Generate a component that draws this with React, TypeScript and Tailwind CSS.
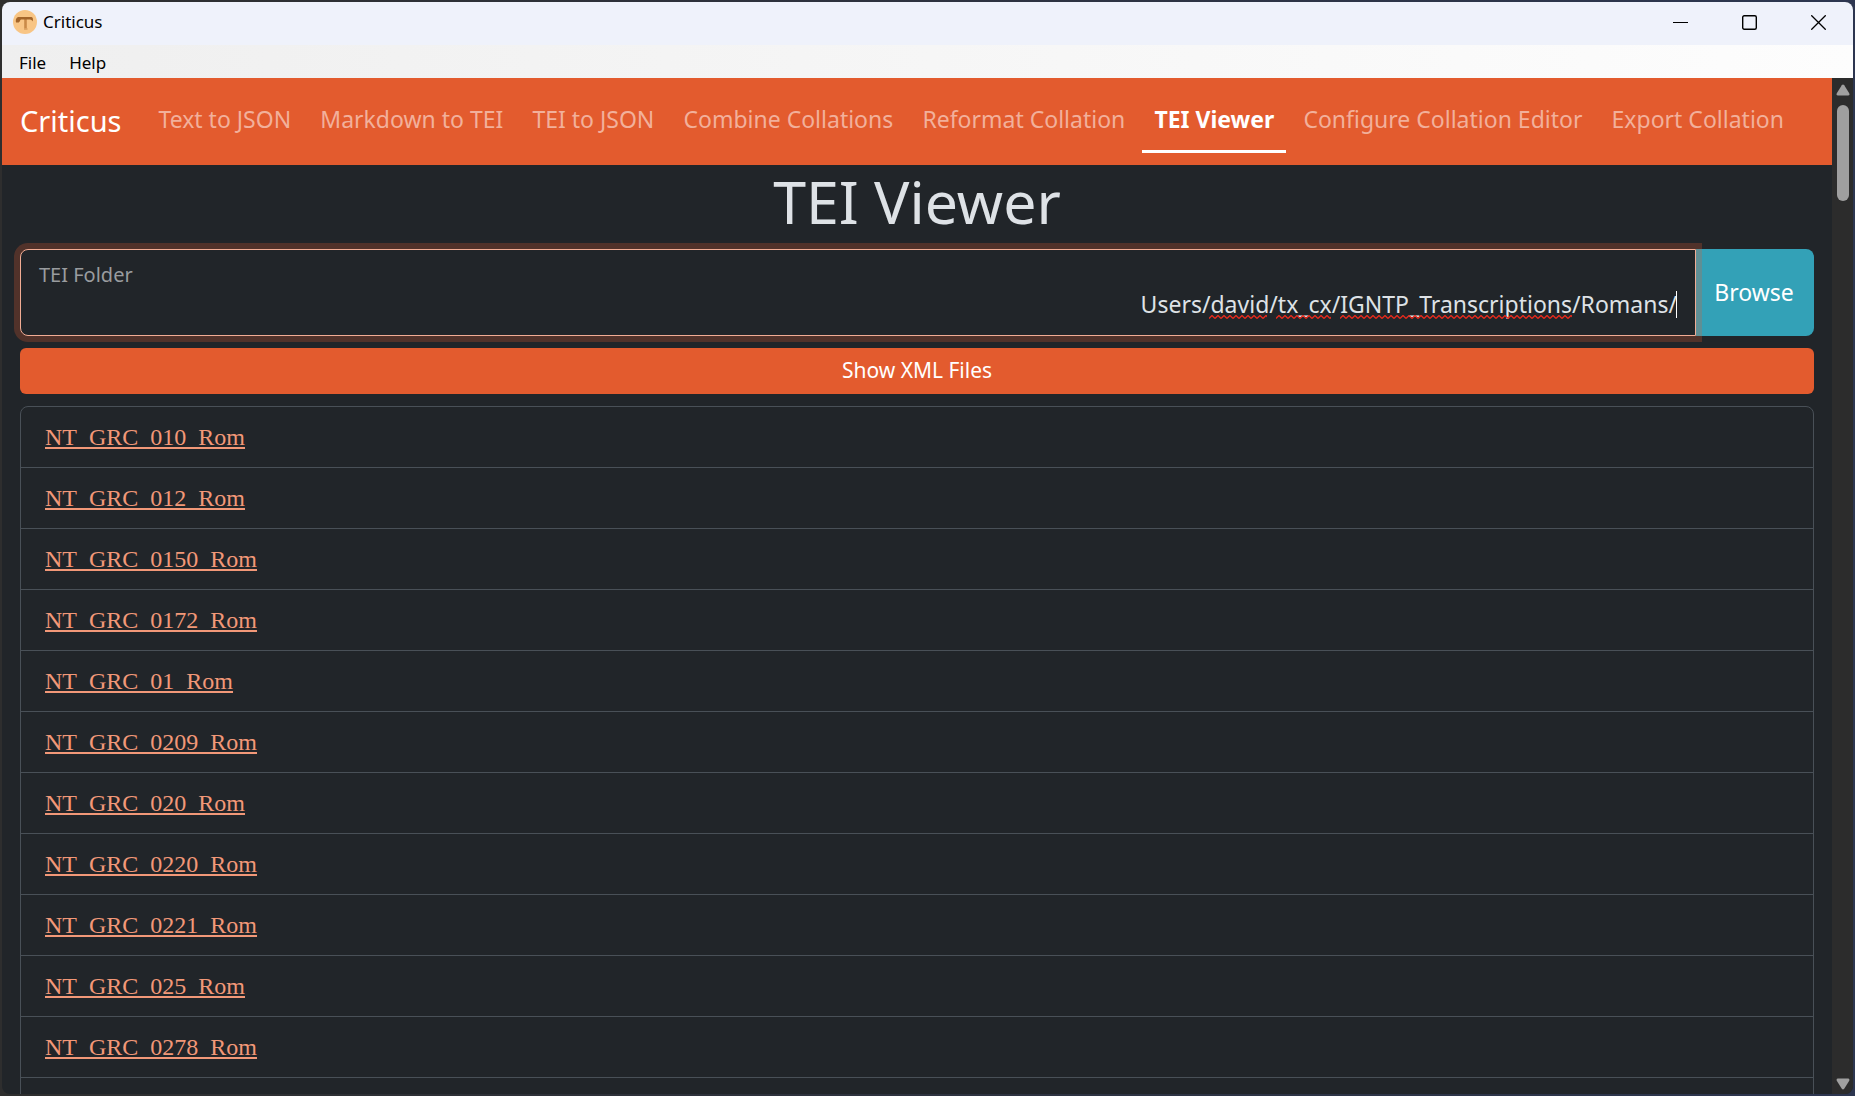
import React, { useState } from "react";

const NAV = [
  "Text to JSON",
  "Markdown to TEI",
  "TEI to JSON",
  "Combine Collations",
  "Reformat Collation",
  "TEI Viewer",
  "Configure Collation Editor",
  "Export Collation",
];

const FILES = [
  "NT_GRC_010_Rom",
  "NT_GRC_012_Rom",
  "NT_GRC_0150_Rom",
  "NT_GRC_0172_Rom",
  "NT_GRC_01_Rom",
  "NT_GRC_0209_Rom",
  "NT_GRC_020_Rom",
  "NT_GRC_0220_Rom",
  "NT_GRC_0221_Rom",
  "NT_GRC_025_Rom",
  "NT_GRC_0278_Rom",
];

function AppIcon() {
  return (
    <svg width="24" height="24" viewBox="0 0 24 24" aria-hidden="true">
      <circle cx="12" cy="12" r="12" fill="#f8c585" />
      <path d="M12.500 9v9.500" stroke="#c98a48" strokeWidth="2.600" />
      <path d="M11 19h3.500" stroke="#d79c5c" strokeWidth="1.500" />
      <path d="M3 12.500C2.300 9 3.500 7 6.500 7h12c1.500 0 1.800 2.500 1.300 4.500-.8-1.500-2-2-4-2H8c-1 0-.8 2.500-2.300 3z" fill="#a4652a" />
    </svg>
  );
}

function TitleBar() {
  return (
    <header className="flex h-[43px] shrink-0 items-center justify-between bg-[#eff2fb] text-black">
      <div className="flex items-center gap-[6px] pb-[3px] pl-[11px] text-[17px] leading-6">
        <AppIcon />
        <span>Criticus</span>
      </div>
      <div className="flex h-full pb-[2px]">
        <button aria-label="Minimize" className="flex w-[69px] items-center justify-center">
          <svg width="15" height="15" viewBox="0 0 15 15" stroke="#000" fill="none">
            <path d="M0 7.500h15" />
          </svg>
        </button>
        <button aria-label="Maximize" className="flex w-[69px] items-center justify-center">
          <svg width="15" height="15" viewBox="0 0 15 15" stroke="#000" fill="none">
            <rect x="0.700" y="0.700" width="13.600" height="13.600" rx="1.500" strokeWidth="1.400" />
          </svg>
        </button>
        <button aria-label="Close" className="flex w-[69px] items-center justify-center">
          <svg width="15" height="15" viewBox="0 0 15 15" stroke="#000" fill="none" strokeWidth="1.300">
            <path d="M.3.3l14.400 14.400M14.700.3L.3 14.700" />
          </svg>
        </button>
      </div>
    </header>
  );
}

function MenuBar() {
  return (
    <div className="flex h-[33px] shrink-0 items-center gap-[23px] bg-linear-to-r from-[#efefef] to-[#fdfdfd] px-[17px] pt-[2px] text-[17px] leading-6 text-black">
      <button>File</button>
      <button>Help</button>
    </div>
  );
}

function Scrollbar() {
  return (
    <div className="flex w-[21px] shrink-0 flex-col items-center bg-[#2c2c2c] pt-[6px] pb-[4px]" aria-hidden="true">
      <svg width="14" height="12" viewBox="0 0 14 12" fill="#a0a0a0">
        <path d="M5.800 1.200Q7-.3 8.200 1.200L13.200 9.200Q14 11.500 12 11.500H2Q0 11.500.8 9.200Z" />
      </svg>
      <div className="mt-[9px] h-24 w-3 rounded-full bg-[#9f9f9f]" />
      <svg className="mt-auto" width="14" height="12" viewBox="0 0 14 12" fill="#a0a0a0">
        <path d="M5.800 10.800Q7 12.300 8.200 10.800L13.200 2.800Q14 .5 12 .5H2Q0 .5.8 2.800Z" />
      </svg>
    </div>
  );
}

function Squiggle({ id, className }: { id: string; className: string }) {
  return (
    <svg className={className} height="4" aria-hidden="true">
      <defs>
        <pattern id={id} width="6" height="4" patternUnits="userSpaceOnUse">
          <path d="M0 3.500L3 .5L6 3.500" fill="none" stroke="#e8291c" strokeWidth="1.300" />
        </pattern>
      </defs>
      <rect width="100%" height="4" fill={`url(#${id})`} />
    </svg>
  );
}

function FolderPicker() {
  const [folder, setFolder] = useState("Users/david/tx_cx/IGNTP_Transcriptions/Romans/");
  return (
    <div className="flex">
      <div className="relative z-10 flex flex-1 flex-col rounded-l-lg border border-[#f1ac94] bg-[#212529] pt-[13px] pb-[14px] shadow-[0_0_0_6px_rgba(227,91,46,0.25)]">
        <label htmlFor="folder" className="px-[18px] text-[20px] leading-6 text-[#999c9f]">
          TEI Folder
        </label>
        <input
          id="folder"
          type="text"
          spellCheck={false}
          value={folder}
          onChange={(e) => setFolder(e.target.value)}
          className="h-[34px] w-full bg-transparent px-[18px] text-right text-[23px] text-[#dee2e6] outline-none"
        />
        <div className="pointer-events-none absolute right-[123px] bottom-4 flex">
          <Squiggle id="sq-a" className="mr-[9px] w-[58px]" />
          <Squiggle id="sq-b" className="mr-[9px] w-[55px]" />
          <Squiggle id="sq-c" className="w-[232px]" />
        </div>
        <div className="pointer-events-none absolute right-[18px] bottom-[17px] h-[27px] w-px bg-white" />
      </div>
      <button className="w-[118px] shrink-0 rounded-r-lg bg-[#33a1b7] pr-[2px] text-[23px] text-white">Browse</button>
    </div>
  );
}

export default function App() {
  return (
    <div className="h-screen bg-linear-to-r from-[#2e2e2e] to-[#2d3650] p-[2px] font-['Noto_Sans',sans-serif]">
      <div className="flex h-full flex-col overflow-hidden rounded-lg bg-[#212529]">
        <TitleBar />
        <MenuBar />
        <div className="flex min-h-0 flex-1">
          <div className="min-w-0 flex-1 overflow-hidden">
            <nav className="flex h-[87px] items-center bg-[#e35b2e] pr-[36px] pl-[18px]">
              <a href="#home" className="mr-[25px] pb-[2px] text-[29px] leading-9 text-white">
                Criticus
              </a>
              <div className="flex flex-1 justify-between text-[23px] leading-9 whitespace-nowrap">
                {NAV.map((item) => (
                  <a
                    key={item}
                    href="#page"
                    className={
                      item === "TEI Viewer"
                        ? "border-b-3 border-white px-3 pt-[11px] pb-[13px] font-bold text-white"
                        : "border-b-3 border-transparent px-3 pt-[11px] pb-[13px] text-[#f2b09b]"
                    }
                  >
                    {item}
                  </a>
                ))}
              </div>
            </nav>
            <main className="px-[18px]">
              <h1 className="mb-3 text-center text-[59px] leading-[72px] text-[#dee2e6]">TEI Viewer</h1>
              <FolderPicker />
              <button className="mt-3 h-[46px] w-full rounded-md bg-[#e35b2e] text-[21px] text-white">
                Show XML Files
              </button>
              <ul className="mt-3 rounded-t-lg border border-[#495057] font-['Liberation_Serif',serif] text-[24px] leading-9">
                {FILES.map((file) => (
                  <li key={file} className="border-b border-[#495057] px-6 py-3">
                    <a
                      href="#file"
                      className="text-[#f29878] underline decoration-2 underline-offset-2 [text-decoration-skip-ink:none]"
                    >
                      {file}
                    </a>
                  </li>
                ))}
                <li className="h-[60px]" />
              </ul>
            </main>
          </div>
          <Scrollbar />
        </div>
      </div>
    </div>
  );
}
